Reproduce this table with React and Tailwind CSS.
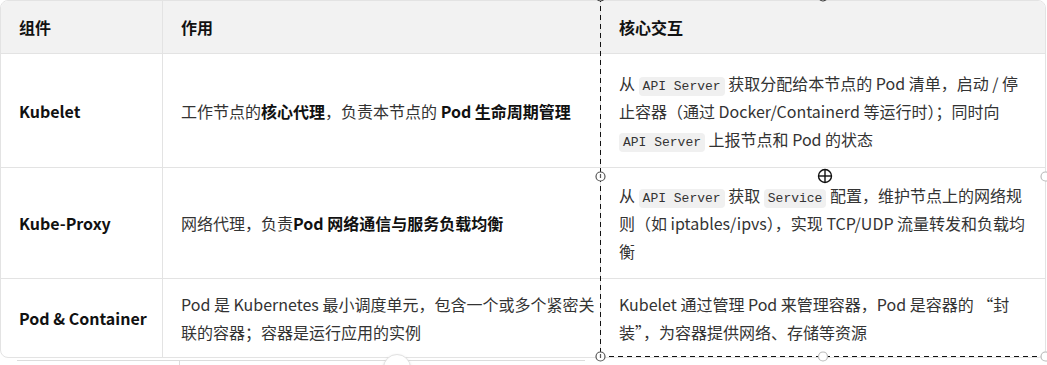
import React from "react";

const Code = ({ children }) => (
  <code className="font-['Liberation_Mono','DejaVu_Sans_Mono',monospace] text-[13px] leading-none bg-[#f0f0f0] text-[#333] rounded-[4px] px-[4px] py-[2px]">
    {children}
  </code>
);

const B = ({ children }) => <b className="font-bold text-[#111]">{children}</b>;

const rows = [
  {
    h: "h-[114px] border-b",
    name: "Kubelet",
    role: (
      <>
        工作节点的<B>核心代理</B>，负责本节点的 <B>Pod 生命周期管理</B>
      </>
    ),
    inter: (
      <>
        从 <Code>API Server</Code> 获取分配给本节点的 Pod 清单，启动 / 停
        <br />
        止容器（通过 Docker/Containerd 等运行时）；同时向
        <br />
        <Code>API Server</Code> 上报节点和 Pod 的状态
      </>
    ),
  },
  {
    h: "h-[111px] border-b",
    name: "Kube-Proxy",
    role: (
      <>
        网络代理，负责<B>Pod 网络通信与服务负载均衡</B>
      </>
    ),
    inter: (
      <>
        从 <Code>API Server</Code> 获取 <Code>Service</Code> 配置，维护节点上的网络规
        <br />
        则（如 iptables/ipvs），实现 TCP/UDP 流量转发和负载均
        <br />衡
      </>
    ),
  },
  {
    h: "h-[78px]",
    name: "Pod & Container",
    role: (
      <>
        Pod 是 Kubernetes 最小调度单元，包含一个或多个紧密关
        <br />
        联的容器；容器是运行应用的实例
      </>
    ),
    inter: (
      <>
        Kubelet 通过管理 Pod 来管理容器，Pod 是容器的 “封
        <br />
        装”，为容器提供网络、存储等资源
      </>
    ),
  },
];

export default function App() {
  return (
    <div className="relative w-[1047px] h-[365px] overflow-hidden bg-white font-['Noto_Sans_CJK_SC','Noto_Sans',sans-serif] text-[16px] text-[#333]">
      <div className="w-[1046px] border border-[#e3e3e3] rounded-[8px] overflow-hidden">
        <div className="grid grid-cols-[162px_438px_1fr]">
          {["组件", "作用", "核心交互"].map((t, i) => (
            <div
              key={t}
              className={`h-[53px] flex items-center px-[18px] bg-[#f2f2f2] border-b border-[#e3e3e3] font-bold text-[#111] ${
                i < 2 ? "border-r" : ""
              }`}
            >
              {t}
            </div>
          ))}
          {rows.map((r) => (
            <React.Fragment key={r.name}>
              <div className={`${r.h} border-r border-[#e3e3e3] flex items-center px-[18px] font-bold text-[#111] whitespace-nowrap`}>
                {r.name}
              </div>
              <div className={`${r.h} border-r border-[#e3e3e3] flex items-center px-[18px] leading-[28px] whitespace-nowrap`}>
                <div>{r.role}</div>
              </div>
              <div className={`${r.h} border-[#e3e3e3] flex items-center px-[18px] leading-[28px] whitespace-nowrap`}>
                <div>{r.inter}</div>
              </div>
            </React.Fragment>
          ))}
        </div>
      </div>

      <div className="ml-[17px] mt-[2px] flex h-[6px] w-[568px]">
        <div className="w-[163px] border-t border-r border-[#dcdcdc]" />
        <div className="flex-1 border-t border-[#dcdcdc]" />
      </div>

      <div className="absolute left-[383px] top-[354px] w-[28px] h-[28px] rounded-full bg-white border border-[#e2e2e2] shadow-sm" />

      <svg className="absolute left-0 top-0 pointer-events-none" width="1047" height="365">
        <g stroke="#111" strokeWidth="1" strokeDasharray="5 4" fill="none">
          <line x1="600.5" y1="-3" x2="600.5" y2="356" />
          <line x1="600" y1="356.5" x2="1047" y2="356.5" />
        </g>
        {[
          [600.5, -3.5, "#333", true],
          [823, -3.5, "#333", false],
          [600.5, 176.5, "#555", true],
          [1045.5, 176.5, "#bbb", false],
          [600.5, 356.5, "#555", true],
          [823, 356.5, "#bbb", false],
          [1045.5, 356.5, "#bbb", false],
        ].map(([x, y, c, tick], i) => (
          <g key={i}>
            <circle cx={x} cy={y} r="4.5" fill="white" stroke={c} strokeWidth="1.2" />
            {tick && <line x1={x} y1={y - 2.5} x2={x} y2={y + 1.5} stroke={c} strokeWidth="1.2" />}
          </g>
        ))}
        <g stroke="#111" strokeWidth="1.4" fill="none">
          <circle cx="825" cy="176" r="6.5" />
          <line x1="818.5" y1="176" x2="831.5" y2="176" />
          <line x1="825" y1="169.5" x2="825" y2="182.5" />
        </g>
      </svg>
    </div>
  );
}
